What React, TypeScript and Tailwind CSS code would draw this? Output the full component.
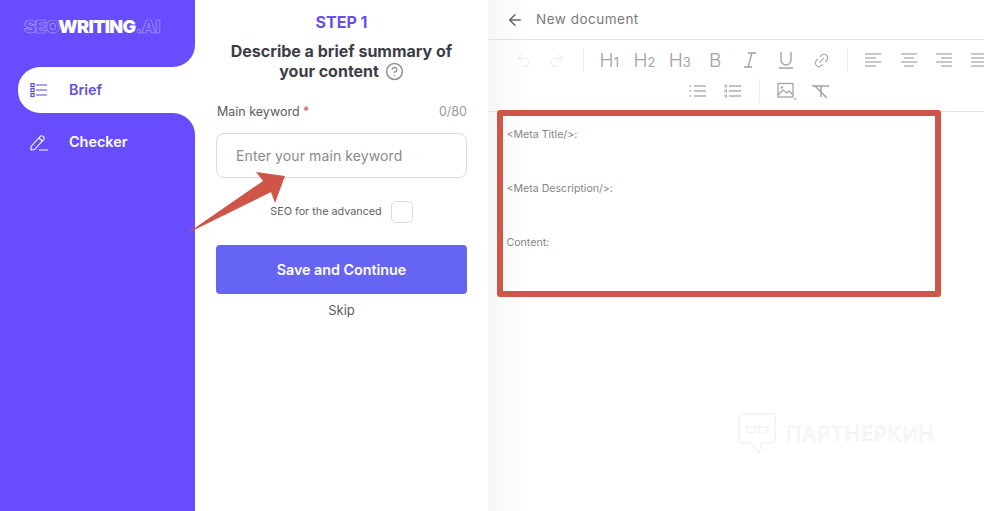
import { ArrowLeft, CircleHelp, Undo2, Redo2, Link2 } from 'lucide-react';
import type { ReactNode } from 'react';

function Tool({ children, dim, className = '' }: { children: ReactNode; dim?: boolean; className?: string }) {
  return (
    <div className={`w-[35.3px] h-[24px] shrink-0 flex items-center justify-center ${dim ? 'text-[#e6e6e6]' : 'text-[#a3a3a3]'} ${className}`}>
      {children}
    </div>
  );
}

function Heading({ n }: { n: number }) {
  return (
    <span className="text-[19px] leading-none font-light">
      H<span className="text-[13px] font-normal">{n}</span>
    </span>
  );
}

function Sep() {
  return <div className="w-px h-[24px] bg-[#ececec] mx-[8px] shrink-0" />;
}

// four ruled lines, widths vary per alignment
function AlignIcon({ lines }: { lines: [number, number][] }) {
  return (
    <svg width="16" height="14" viewBox="0 0 16 14" stroke="currentColor" strokeWidth="1.2">
      {lines.map(([x1, x2], i) => (
        <line key={i} x1={x1} x2={x2} y1={1 + i * 4} y2={1 + i * 4} />
      ))}
    </svg>
  );
}

function ListIcon({ numbered }: { numbered?: boolean }) {
  return (
    <svg width="17" height="14" viewBox="0 0 17 14" stroke="currentColor" strokeWidth="1.3">
      {[2, 7, 12].map((y) => (
        <g key={y}>
          <line x1="5" x2="17" y1={y} y2={y} />
          {numbered ? (
            <line x1="0.5" x2="3" y1={y} y2={y} strokeWidth="3" strokeDasharray="1 0.6" />
          ) : (
            <line x1="0.5" x2="2" y1={y} y2={y} strokeWidth="1.6" />
          )}
        </g>
      ))}
    </svg>
  );
}

export default function App() {
  return (
    <div className="relative w-[984px] h-[511px] overflow-hidden flex bg-white font-['Inter',sans-serif]">
      {/* Sidebar */}
      <aside className="w-[195px] h-full flex flex-col shrink-0 bg-white">
        <div className="h-[67px] bg-[#674dff] rounded-br-[22px] pl-[24px] pt-[15px]">
          <div className="text-[18px] leading-[24px] font-black tracking-[-0.65px] whitespace-nowrap">
            <span className="text-transparent [-webkit-text-stroke:0.7px_#a99bff]">SEO</span>
            <span className="text-white">WRITING</span>
            <span className="text-transparent [-webkit-text-stroke:0.7px_#a99bff]">.AI</span>
          </div>
        </div>
        <div className="bg-[#674dff] pl-[18px]">
          <div className="h-[46px] bg-white rounded-l-[22px] flex items-center pl-[12px] text-[#6650dd]">
            <svg width="18" height="14" viewBox="0 0 18 14" fill="none" stroke="#5b47d6" strokeWidth="1.2" className="mt-[-1px]">
              <rect x="1" y="0.6" width="3" height="3" />
              <rect x="1" y="5.6" width="3" height="3" />
              <rect x="1" y="10.6" width="3" height="3" />
              <path d="M6 2h11M6 7h11M6 12h11" />
            </svg>
            <span className="ml-[21px] text-[14.4px] leading-[20px] font-semibold mt-[-1px]">Brief</span>
          </div>
        </div>
        <div className="flex-1 bg-[#674dff] rounded-tr-[22px] pl-[30px] pt-[17px]">
          <div className="h-[24px] flex items-center text-white">
            <svg width="18" height="17" viewBox="0 0 18 17" fill="none" stroke="currentColor" strokeWidth="1.1" strokeLinejoin="round">
              <path d="M1 12.5 10.5 2.2a1.6 1.6 0 0 1 2.3 0l1 1a1.6 1.6 0 0 1 0 2.2L4.6 15.5 1 16z" />
              <path d="M9 4l3.5 3.4M9 16h9" />
            </svg>
            <span className="ml-[21px] text-[14.4px] font-semibold">Checker</span>
          </div>
        </div>
      </aside>

      {/* Brief form */}
      <section className="w-[293px] h-full shrink-0 flex flex-col items-center pt-[12px]">
        <div className="text-[16px] leading-[20px] font-bold text-[#6a4fe8]">STEP 1</div>
        <h2 className="mt-[9px] w-[250px] text-center text-[16px] leading-[20px] font-bold text-[#3d3d46]">
          Describe a brief summary of your content{' '}
          <CircleHelp className="inline-block ml-[2px] align-[-4px] w-[19px] h-[19px] text-[#949494]" strokeWidth={1.9} />
        </h2>
        <div className="mt-[21px] ml-[1px] w-[250px] flex justify-between text-[12.5px] leading-[20px] text-[#5c5c5c]">
          <span>Main keyword <span className="text-[#e5484d]">*</span></span>
          <span className="text-[#999999]">0/80</span>
        </div>
        <div className="mt-[11px] w-[251px] h-[45px] border border-[#dcdcdc] rounded-[8px] flex items-center pl-[19px] text-[14px] tracking-[0.1px] text-[#8a8a8a]">
          Enter your main keyword
        </div>
        <div className="mt-[23px] flex items-center gap-[9px] text-[10.8px] text-[#5f5f5f]">
          <span>SEO for the advanced</span>
          <div className="w-[22px] h-[22px] border border-[#dcdcdc] rounded-[5px]" />
        </div>
        <button className="mt-[22px] w-[251px] h-[49px] bg-[#6664f3] rounded-[4px] text-white text-[14.3px] font-semibold">
          Save and Continue
        </button>
        <div className="mt-[6px] text-[13px] leading-[20px] text-[#5c5c5c]">Skip</div>
      </section>

      {/* Editor */}
      <main className="flex-1 min-w-0 h-full flex flex-col bg-gradient-to-r from-[#f6f6f6] via-white via-[8%] to-white">
        <header className="h-[40px] shrink-0 border-b border-[#e3e3e3] flex items-center pl-[18px]">
          <ArrowLeft className="w-[18px] h-[18px] text-[#666666]" strokeWidth={2} />
          <span className="ml-[12px] text-[13.5px] tracking-[0.5px] text-[#7a7a7a]">New document</span>
        </header>
        <div className="h-[72px] shrink-0 border-b border-[#e3e3e3] pt-[8px]">
          <div className="flex items-center w-[520px] pl-[18px]">
            <Tool dim><Undo2 className="w-[17px] h-[17px]" strokeWidth={1.2} /></Tool>
            <Tool dim className="-ml-[2px]"><Redo2 className="w-[17px] h-[17px]" strokeWidth={1.2} /></Tool>
            <Sep />
            <Tool><Heading n={1} /></Tool>
            <Tool><Heading n={2} /></Tool>
            <Tool><Heading n={3} /></Tool>
            <Tool><span className="text-[19px] leading-none font-light">B</span></Tool>
            <Tool>
              <svg width="14" height="16" viewBox="0 0 14 16" fill="none" stroke="currentColor" strokeWidth="1.4">
                <path d="M5 1h8M1 15h8M9 1 5 15" />
              </svg>
            </Tool>
            <Tool>
              <svg width="14" height="18" viewBox="0 0 14 18" fill="none" stroke="currentColor" strokeWidth="1.4">
                <path d="M2 1v8a5 5 0 0 0 10 0V1M0 17h14" />
              </svg>
            </Tool>
            <Tool><Link2 className="w-[17px] h-[17px] -rotate-45" strokeWidth={1.5} /></Tool>
            <Sep />
            <Tool><AlignIcon lines={[[0, 16], [0, 11], [0, 16], [0, 11]]} /></Tool>
            <Tool><AlignIcon lines={[[0, 16], [3, 13], [0, 16], [3, 13]]} /></Tool>
            <Tool><AlignIcon lines={[[0, 16], [5, 16], [0, 16], [5, 16]]} /></Tool>
            <Tool><AlignIcon lines={[[0, 16], [0, 16], [0, 16], [0, 16]]} /></Tool>
          </div>
          <div className="mt-[7px] flex items-center pl-[192px]">
            <Tool><ListIcon /></Tool>
            <Tool><ListIcon numbered /></Tool>
            <Sep />
            <Tool className="pl-[3px]">
              <svg width="20" height="18" viewBox="0 0 20 18" fill="none" stroke="currentColor" strokeWidth="1.3">
                <rect x="1" y="1.5" width="15" height="13.5" />
                <circle cx="5" cy="5.5" r="1.2" fill="currentColor" stroke="none" />
                <path d="M1 13l5-5 4 3 2-2 4 4" />
                <path d="M17 16.5h2.5l-1.2 1.2z" fill="#555555" stroke="none" />
              </svg>
            </Tool>
            <Tool>
              <svg width="19" height="15" viewBox="0 0 19 15" fill="none" stroke="currentColor" strokeWidth="1.5">
                <path d="M1 2h17M10 2v11M3 1l13 13" />
              </svg>
            </Tool>
          </div>
        </div>
        <div className="pl-[18.5px] pt-[15px] text-[10.6px] leading-[16px] text-[#858585] flex flex-col gap-[38px]">
          <p>&lt;Meta Title/&gt;:</p>
          <p>&lt;Meta Description/&gt;:</p>
          <p>Content:</p>
        </div>
        <div className="mt-[162px] ml-[250px] flex items-center text-[#ececec]">
          <svg width="38" height="42" viewBox="0 0 38 42" fill="none" stroke="currentColor" strokeWidth="1">
            <path d="M4 1h30a3 3 0 0 1 3 3v23a3 3 0 0 1-3 3H24l-3 10-8-10H4a3 3 0 0 1-3-3V4a3 3 0 0 1 3-3z" />
            <path d="M7 14h24M9 14v4a2 2 0 0 0 2 2h4a2 2 0 0 0 2-2v-4M21 14v4a2 2 0 0 0 2 2h4a2 2 0 0 0 2-2v-4" />
          </svg>
          <span className="ml-[10px] text-[20.5px] leading-none font-normal tracking-[0.75px] text-transparent [-webkit-text-stroke:0.6px_#ebebeb]">ПАРТНЕРКИН</span>
        </div>
      </main>

      {/* Annotation overlays */}
      <div className="absolute left-[497px] top-[110px] w-[444px] h-[187px] border-[6px] border-[#cf5548] rounded-[3px]" />
      <svg className="absolute left-0 top-0 pointer-events-none" width="984" height="511">
        <polygon points="186,234 263,181 256,172 285,176 275,203 271,192" fill="#cf5548" />
      </svg>
    </div>
  );
}
